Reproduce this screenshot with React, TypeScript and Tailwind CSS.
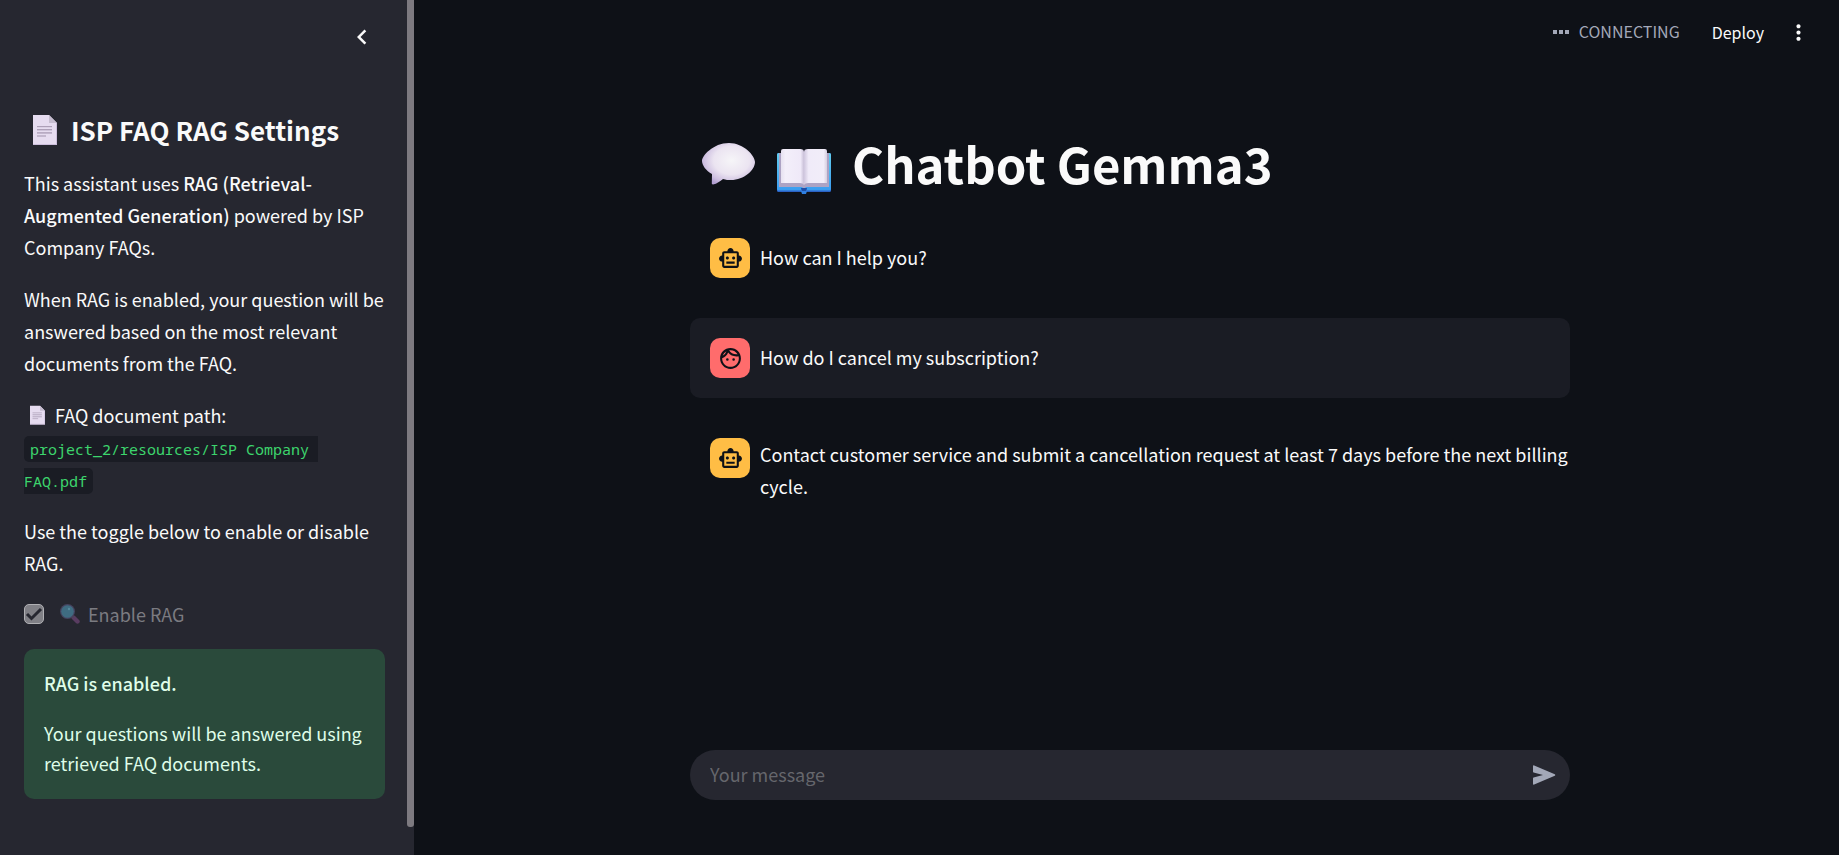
import { useState } from "react";
import type { ReactNode } from "react";
import { MdChevronLeft, MdMoreVert, MdOutlineFace, MdOutlineSmartToy } from "react-icons/md";

function PageEmoji({ className }: { className: string }) {
  return (
    <svg viewBox="0 0 24 30" className={className} aria-hidden="true">
      <path d="M0 0h16l8 8v22H0z" fill="#e6dcf0" />
      <path d="M16 0l8 8h-8z" fill="#c6bdd0" />
      <path d="M23 8h1v22H0v-1h23z" fill="#cdbfdc" />
      <g fill="#ada0b8">
        <rect x="4" y="11" width="15" height="1.2" />
        <rect x="4" y="14" width="15" height="1.4" />
        <rect x="4" y="17.2" width="15" height="1.4" />
        <rect x="4" y="20.4" width="9" height="1.2" />
      </g>
    </svg>
  );
}

function SpeechEmoji() {
  return (
    <svg viewBox="0 0 53 42" className="h-[42px] w-[53px]" aria-hidden="true">
      <defs>
        <radialGradient id="bubble" cx="0.56" cy="0.42" r="0.62">
          <stop offset="0" stopColor="#f6f5f8" />
          <stop offset="0.55" stopColor="#ebe4f1" />
          <stop offset="0.85" stopColor="#cdbfe0" />
          <stop offset="1" stopColor="#b3a0d2" />
        </radialGradient>
      </defs>
      <path
        d="M27 0C42 0 53 13 53 19c0 8-11 18-24 18-3 0-5 0-8-1-3 2-6 5-10 5.500-1 0-1.300-.8-1.200-1.500L10 31C4 28 0 22 0 18 0 13 11 0 27 0z"
        fill="url(#bubble)"
      />
    </svg>
  );
}

function BookEmoji() {
  return (
    <svg viewBox="0 0 54 45" className="h-[45px] w-[54px]" aria-hidden="true">
      <defs>
        <linearGradient id="cover" x1="0" y1="0" x2="0" y2="1">
          <stop offset="0" stopColor="#62cdef" />
          <stop offset="1" stopColor="#3a9cf0" />
        </linearGradient>
        <linearGradient id="leftPage" x1="0" y1="0" x2="1" y2="0">
          <stop offset="0" stopColor="#e6e1f0" />
          <stop offset="0.2" stopColor="#f3effa" />
          <stop offset="0.85" stopColor="#efe9f8" />
          <stop offset="1" stopColor="#c9c0d8" />
        </linearGradient>
        <linearGradient id="rightPage" x1="0" y1="0" x2="1" y2="0">
          <stop offset="0" stopColor="#cfc6de" />
          <stop offset="0.2" stopColor="#f0ebf9" />
          <stop offset="0.85" stopColor="#f1edf9" />
          <stop offset="1" stopColor="#d5cfe0" />
        </linearGradient>
      </defs>
      <rect x="0" y="4" width="54" height="39" rx="1.500" fill="#2b62c4" />
      <rect x="0" y="4" width="54" height="37.500" rx="1.500" fill="url(#cover)" />
      <path d="M2 4h50v34H29l-2 2-2-2H2z" fill="#aca3c4" />
      <path d="M4 2q0-2 2-2h17q4 0 4 3v33q-1-2-4-2H4z" fill="url(#leftPage)" />
      <path d="M50 2q0-2-2-2H31q-4 0-4 3v33q1-2 4-2h19z" fill="url(#rightPage)" />
      <path d="M24 39h6v3l-1 3h-4L24 42z" fill="#2f7fe0" />
      <path d="M24 39h6l-1 3h-4z" fill="#1f4fa8" />
    </svg>
  );
}

function MagnifierEmoji() {
  return (
    <svg viewBox="0 0 20 20" className="size-5" aria-hidden="true">
      <path d="M13.500 13.500l4 4" stroke="#593c61" strokeWidth="4.400" strokeLinecap="round" />
      <path d="M11 11l2.500 2.500" stroke="#4d4459" strokeWidth="2" />
      <circle cx="7.500" cy="7.500" r="7.500" fill="#46435f" />
      <circle cx="7.500" cy="7.500" r="6.300" fill="#3f6c82" />
      <circle cx="9" cy="5" r="1.200" fill="#55899c" />
    </svg>
  );
}

function SendIcon() {
  return (
    <svg viewBox="0 0 24 20" className="h-5 w-6" aria-hidden="true">
      <path
        d="M1 1.200Q1 0 2.200.4L22.800 9.200Q24 10 22.800 10.800L2.200 19.600Q1 20 1 18.800V13.200Q1 12.700 1.600 12.500L11 10 1.600 7.500Q1 7.300 1 6.800z"
        fill="#a3a8b8"
      />
    </svg>
  );
}

function Message({ role, children }: { role: "user" | "assistant"; children: ReactNode }) {
  const user = role === "user";
  return (
    <article className={`flex items-start gap-2.5 rounded-[10px] py-5 pl-5 ${user ? "bg-[#1a1c24]" : ""}`}>
      <span
        className={`flex size-10 shrink-0 items-center justify-center rounded-[10px] text-[25px] text-[#0e1117] ${
          user ? "bg-[#ff6c6c]" : "bg-[#ffbd45]"
        }`}
      >
        {user ? <MdOutlineFace /> : <MdOutlineSmartToy />}
      </span>
      <p className="my-auto pb-0.5 text-[18px] leading-8">{children}</p>
    </article>
  );
}

function Sidebar() {
  return (
    <aside className="flex w-[414px] shrink-0 bg-[#262730]">
      <div className="flex-1 pr-[22px] pl-6">
        <div className="flex h-28 justify-end pt-[22px] pr-2">
          <button type="button" aria-label="Collapse sidebar" className="size-[30px] text-[30px]">
            <MdChevronLeft />
          </button>
        </div>
        <h2 className="mb-[19px] flex h-9 items-center gap-3.5 pl-[9px] text-[26px] font-semibold whitespace-nowrap">
          <PageEmoji className="h-[30px] w-6" />
          <span className="pb-0.5">ISP FAQ RAG Settings</span>
        </h2>
        <div className="flex flex-col gap-5 text-[18px] leading-8">
          <p>
            This assistant uses{" "}
            <strong className="font-medium">RAG (Retrieval-Augmented Generation)</strong> powered by ISP Company
            FAQs.
          </p>
          <p>
            When RAG is enabled, your question will be answered based on the most relevant documents from the FAQ.
          </p>
          <div>
            <p className="flex items-center gap-2.5 pl-1.5">
              <PageEmoji className="h-5 w-[15px]" />
              FAQ document path:
            </p>
            <code className="rounded-[5px] bg-[#1a1c24] px-1.5 py-[3px] font-['Noto_Sans_Mono','Liberation_Mono',monospace] text-[15px] leading-5 whitespace-break-spaces text-[#3dd56d]">
              project_2/resources/ISP Company FAQ.pdf
            </code>
          </div>
          <p>Use the toggle below to enable or disable RAG.</p>
        </div>
        <label className="mt-5 flex h-[30px] items-center text-[18px] text-[#7b7b81]">
          <span className="grid">
            <input
              type="checkbox"
              defaultChecked
              disabled
              className="col-start-1 row-start-1 size-5 appearance-none rounded-[5px] border border-[#b0b0b4] bg-[#808086]"
            />
            <svg viewBox="0 0 20 20" className="col-start-1 row-start-1 size-5" aria-hidden="true">
              <path d="M3 10l4.500 4.500L17 5" fill="none" stroke="#262730" strokeWidth="3" />
            </svg>
          </span>
          <span className="ml-4 flex items-center gap-2">
            <MagnifierEmoji />
            Enable RAG
          </span>
        </label>
        <section className="mt-5 flex flex-col gap-5 rounded-[10px] bg-[#2a4a3b] px-5 pt-[19px] pb-[21px] text-[18px] leading-[30px] text-[#dffde9]">
          <p className="font-medium">RAG is enabled.</p>
          <p>Your questions will be answered using retrieved FAQ documents.</p>
        </section>
      </div>
      <div className="mb-7 w-[7px] rounded-b-[3px] bg-[#7d7a80]" />
    </aside>
  );
}

export default function App() {
  const [message, setMessage] = useState("");
  return (
    <div className="flex min-h-screen bg-[#0e1117] font-['Noto_Sans_CJK_SC',sans-serif] text-[#fafafa]">
      <Sidebar />
      <div className="flex min-w-0 flex-1 flex-col">
        <header className="flex h-16 items-center justify-end pr-7 text-[16px]">
          <span className="flex gap-[2px]" aria-hidden="true">
            <span className="size-1 bg-[#a3a8b8]" />
            <span className="size-1 bg-[#a3a8b8]" />
            <span className="size-1 bg-[#a3a8b8]" />
          </span>
          <span className="ml-2.5 pb-0.5 text-[#a3a8b8]">CONNECTING</span>
          <button type="button" className="ml-8">
            Deploy
          </button>
          <button type="button" aria-label="Main menu" className="ml-[22px] text-[25px]">
            <MdMoreVert />
          </button>
        </header>
        <main className="flex flex-1 flex-col pb-[55px] pl-[7px]">
          <div className="mx-auto flex w-full max-w-[880px] flex-1 flex-col">
            <h1 className="mt-[66px] mb-[22px] flex h-[66px] items-center pl-3 text-[49px] font-bold whitespace-nowrap">
              <span className="mt-0.5">
                <SpeechEmoji />
              </span>
              <span className="mt-4 mr-[21px] ml-[22px]">
                <BookEmoji />
              </span>
              Chatbot Gemma3
            </h1>
            <div className="flex flex-col gap-5">
              <Message role="assistant">How can I help you?</Message>
              <Message role="user">How do I cancel my subscription?</Message>
              <Message role="assistant">
                Contact customer service and submit a cancellation request at least 7 days before the next billing
                cycle.
              </Message>
            </div>
            <form
              onSubmit={(event) => event.preventDefault()}
              className="mt-auto flex h-[50px] items-center rounded-full bg-[#262730] pr-3.5 pl-5"
            >
              <input
                type="text"
                aria-label="Your message"
                placeholder="Your message"
                value={message}
                onChange={(event) => setMessage(event.target.value)}
                className="min-w-0 flex-1 bg-transparent pb-0.5 text-[18px] outline-none placeholder:text-[#65666c]"
              />
              <button type="submit" aria-label="Send">
                <SendIcon />
              </button>
            </form>
          </div>
        </main>
      </div>
    </div>
  );
}
